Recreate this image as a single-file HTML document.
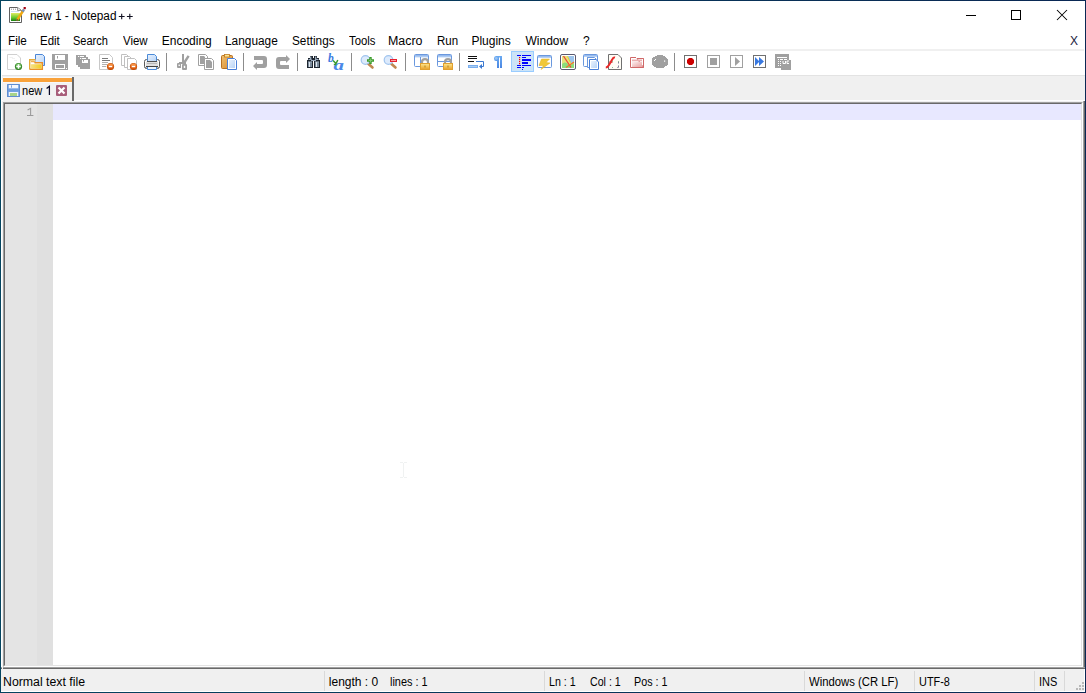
<!DOCTYPE html>
<html><head><meta charset="utf-8">
<style>
*{margin:0;padding:0;box-sizing:border-box}
html,body{width:1086px;height:693px;overflow:hidden;background:#fff}
body{position:relative;font-family:"Liberation Sans",sans-serif;font-size:12px;color:#000}
.a{position:absolute}
.t{position:absolute;white-space:nowrap;line-height:14px;font-size:12px;transform-origin:0 0;color:#000}
.ic{position:absolute;width:16px;height:16px;overflow:visible}
.sep{position:absolute;top:53px;width:1px;height:18px;background:#a0a0a0}
.ssep{position:absolute;top:671px;width:1px;height:20px;background:#d9d9d9}
</style></head><body>

<svg class="a" style="left:0;top:0" width="40" height="30" viewBox="0 0 40 30">
<defs><linearGradient id="gAppGreen2" x1="0" y1="0" x2="0" y2="1"><stop offset="0" stop-color="#e0ea60"/><stop offset="0.55" stop-color="#6ccc30"/><stop offset="1" stop-color="#168010"/></linearGradient></defs>
<path d="M9.5 7.5H17.5L21.5 10.5V22.5H9.5Z" fill="#fff" stroke="#606060"/>
<path d="M17.5 7.5V10.5H21" fill="#e8e8e8" stroke="#808080" stroke-width="0.8"/>
<path d="M11 9.2H12M13 9.2H14M15 9.2H16" stroke="#909090"/>
<path d="M11 11.5H19" stroke="#c8d8e8" stroke-width="0.8"/>
<rect x="11" y="13" width="9" height="8" fill="url(#gAppGreen2)"/>
<path d="M17.2 20L23.6 10" stroke="#f0a810" stroke-width="2.4"/>
<path d="M16.6 20.8L17.6 19.2" stroke="#806040" stroke-width="1.6"/>
<path d="M22.6 11.6L24 9.4" stroke="#7090c0" stroke-width="2.2"/>
<rect x="23.6" y="7" width="2.2" height="2.2" fill="#a00010"/>
</svg>
<svg class="a" style="left:110px;top:8px" width="30" height="16" viewBox="110 8 30 16"><path d="M118.8 16.5H124.6M121.7 13.8V19.2M126.9 16.5H132.7M129.8 13.8V19.2" stroke="#101020" stroke-width="1.1"/></svg>
<div class="t" style="left:583px;top:34px">?</div>
<div class="a" style="left:966px;top:15px;width:10px;height:1px;background:#000"></div>
<div class="a" style="left:1011px;top:10px;width:10px;height:10px;border:1px solid #000"></div>
<svg class="a" style="left:1056px;top:9px" width="12" height="12" viewBox="0 0 12 12"><path d="M1 1L11 11M11 1L1 11" stroke="#000" stroke-width="1.05" fill="none"/></svg>
<div class="t" style="left:1070px;top:34px;color:#1a1a40">X</div>
<div class="a" style="left:1px;top:49px;width:1083px;height:2px;background:#f0f0f0"></div>
<svg class="a" style="left:0;top:0" width="1086" height="80" viewBox="0 0 1086 80"><defs>
<linearGradient id="gGreen" x1="0" y1="0" x2="0" y2="1"><stop offset="0" stop-color="#7cd06a"/><stop offset="1" stop-color="#2f8a22"/></linearGradient>
<linearGradient id="gOrange" x1="0" y1="0" x2="0" y2="1"><stop offset="0" stop-color="#ffa050"/><stop offset="1" stop-color="#d04a00"/></linearGradient>
<linearGradient id="gBlueDoc" x1="0" y1="0" x2="1" y2="1"><stop offset="0" stop-color="#e8f1fd"/><stop offset="1" stop-color="#b8d4f6"/></linearGradient>
<linearGradient id="gYellow" x1="0" y1="0" x2="1" y2="0"><stop offset="0" stop-color="#f6e08a"/><stop offset="1" stop-color="#f2cc20"/></linearGradient>
<linearGradient id="gClip" x1="0" y1="0" x2="1" y2="1"><stop offset="0" stop-color="#f0c070"/><stop offset="1" stop-color="#d88a30"/></linearGradient>
<linearGradient id="gPrinter" x1="0" y1="0" x2="0" y2="1"><stop offset="0" stop-color="#ffffff"/><stop offset="1" stop-color="#b8b8b8"/></linearGradient>
<linearGradient id="gLock" x1="0" y1="0" x2="0" y2="1"><stop offset="0" stop-color="#ffe890"/><stop offset="1" stop-color="#e8a028"/></linearGradient>
<linearGradient id="gTitle" x1="0" y1="0" x2="0" y2="1"><stop offset="0" stop-color="#8ab2ec"/><stop offset="1" stop-color="#c4daf6"/></linearGradient>
<linearGradient id="gPink" x1="0" y1="0" x2="1" y2="1"><stop offset="0" stop-color="#fbecec"/><stop offset="1" stop-color="#e8a0a0"/></linearGradient>
<linearGradient id="gAppGreen" x1="0" y1="0" x2="0" y2="1"><stop offset="0" stop-color="#e8f060"/><stop offset="0.5" stop-color="#70d030"/><stop offset="1" stop-color="#208a10"/></linearGradient>
</defs><path d="M7.5 54.5H17L20.5 58V69.5H7.5Z" fill="#fff" stroke="#d0d0d0"/><path d="M9.5 57.5H13M12 58.5H15M14 60.5H17" stroke="#f0f0f0"/><circle cx="18.5" cy="66.5" r="3.6" fill="#2e7d22"/><circle cx="18.5" cy="66.5" r="2.9" fill="url(#gGreen)"/><path d="M18.5 64.3V68.7M16.3 66.5H20.7" stroke="#fff" stroke-width="1.6"/><path d="M35.5 62V54.5H42.5L44.5 56.5V65.5H42" fill="url(#gBlueDoc)" stroke="#4a86d8"/><rect x="30" y="59.5" width="5.5" height="10" fill="#fff"/><rect x="30" y="62.5" width="12.5" height="7" fill="#fff"/><path d="M29.7 69.5V59.7H35.5" fill="none" stroke="#e6aa3a" stroke-width="1.4"/><path d="M31 61.5H33.5Q34.5 61.5 35 62.5" fill="none" stroke="#f0b050" stroke-width="1.6"/><path d="M34.5 62.7H42.3V69.3H29.7" fill="none" stroke="#e8902a" stroke-width="1.5"/><rect x="30.5" y="64.2" width="11" height="4.4" fill="url(#gYellow)"/><path d="M52 54H68V70H53L52 69Z" fill="#a0a0a0"/><rect x="55" y="55" width="10" height="5" fill="#fff"/><rect x="57" y="56" width="1" height="2.5" fill="#a0a0a0"/><rect x="55" y="64" width="10" height="5" fill="#fff"/><rect x="56" y="65" width="8" height="3" fill="#a0a0a0"/><rect x="66" y="68" width="1" height="1" fill="#fff"/><rect x="76" y="55" width="10" height="10" fill="#a0a0a0"/><rect x="78" y="56" width="1.2" height="1.2" fill="#fff"/><rect x="80" y="56" width="4" height="1.2" fill="#fff"/><rect x="78" y="57" width="10" height="10" fill="#a0a0a0"/><rect x="80" y="58" width="1.2" height="1.2" fill="#fff"/><rect x="82" y="58" width="4" height="1.2" fill="#fff"/><rect x="80" y="59" width="10" height="10" fill="#a0a0a0"/><rect x="82" y="60" width="6" height="3" fill="#fff"/><rect x="83" y="60" width="1" height="1.6" fill="#a0a0a0"/><path d="M99.5 54.5H109.5L112.5 57.5V69.5H99.5Z" fill="#fff" stroke="#c8c8c8"/><path d="M102 58.5H108M102 60.5H110" stroke="#7a7a7a"/><path d="M102 62.5H108M102 64.5H107M102 66.5H106" stroke="#b0b0b0"/><circle cx="110.5" cy="66.5" r="3.6" fill="#c04800"/><circle cx="110.5" cy="66.5" r="3" fill="url(#gOrange)"/><path d="M108.8 66.5H112.2" stroke="#fff" stroke-width="1.4"/><path d="M121.5 54.5H126.5L128.5 56.5V65.5H121.5Z" fill="#fff" stroke="#c0c0c0"/><path d="M124.5 56.5H129.5L131.5 58.5V67.5H124.5Z" fill="#fff" stroke="#c0c0c0"/><path d="M127.5 58.5H134.5L136.5 60.5V69.5H127.5Z" fill="#fff" stroke="#c0c0c0"/><circle cx="133.5" cy="66.5" r="3.6" fill="#c04800"/><circle cx="133.5" cy="66.5" r="3" fill="url(#gOrange)"/><path d="M131.8 66.5H135.2" stroke="#fff" stroke-width="1.4"/><rect x="144.5" y="59.5" width="15" height="9" rx="2" fill="url(#gPrinter)" stroke="#5a5a5a"/><rect x="146" y="62" width="12" height="4" fill="#e0e0e0"/><path d="M147 63.5H157" stroke="#b8b8b8"/><path d="M146 66.5H158" stroke="#404040"/><path d="M145.5 61V67M158.5 61V67" stroke="#fff" stroke-width="0.8"/><path d="M147.5 61.5V54.5H154.5L156.5 56.5V61.5" fill="url(#gBlueDoc)" stroke="#4a8ad8"/><path d="M147 61.5H157" stroke="#505050"/><path d="M147.5 67V69.5H156.5V67" fill="#eef6ff" stroke="#4a8ad8"/><rect x="166" y="53" width="1" height="18" fill="#8c8c8c"/><rect x="243" y="53" width="1" height="18" fill="#8c8c8c"/><rect x="297" y="53" width="1" height="18" fill="#8c8c8c"/><rect x="351" y="53" width="1" height="18" fill="#8c8c8c"/><rect x="405" y="53" width="1" height="18" fill="#8c8c8c"/><rect x="459" y="53" width="1" height="18" fill="#8c8c8c"/><rect x="674" y="53" width="1" height="18" fill="#8c8c8c"/><rect x="182" y="54" width="2" height="9" fill="#a0a0a0"/><path d="M188 56.8L185 61.5" stroke="#a0a0a0" stroke-width="2.4" stroke-linecap="square"/><rect x="179" y="62" width="7" height="2" fill="#a0a0a0"/><path d="M177 64Q177 63 178 63H181V68H178Q177 68 177 67Z" fill="#a0a0a0"/><rect x="178.5" y="64.6" width="1.4" height="1.4" fill="#fff"/><path d="M182 65Q182 64 183 64H186Q187 64 187 65V69Q187 70 186 70H183Q182 70 182 69Z" fill="#a0a0a0"/><rect x="183.8" y="65.8" width="1.4" height="2.2" fill="#fff"/><path d="M198.5 54.5H205.5L207.5 56.5V65.5H198.5Z" fill="#fff" stroke="#a0a0a0"/><path d="M200 56H204L205 57V64H200Z" fill="#a0a0a0"/><path d="M204.5 58.5H211.5L213.5 60.5V69.5H204.5Z" fill="#fff" stroke="#a0a0a0"/><path d="M206 60H210L212 62V68H206Z" fill="#a0a0a0"/><rect x="221.5" y="55.5" width="11" height="13" rx="1" fill="url(#gClip)" stroke="#b87020"/><rect x="224.5" y="54.5" width="5" height="2.5" fill="#ffe890" stroke="#c07820" stroke-width="0.8"/><path d="M227.5 58.5H234.5L236.5 60.5V69.5H227.5Z" fill="#fff" stroke="#4a80d8"/><rect x="229" y="60" width="6" height="8" fill="url(#gBlueDoc)"/><path d="M253 66L257 62V64H262Q263 64 263 63V61Q263 60 262 60H254V56H264Q267 56 267 59V65Q267 68 264 68H257V70Z" fill="#a0a0a0"/><path d="M290 59L286 55V57H279Q276 57 276 60V66Q276 69 279 69H289V65H281Q280 65 280 64V62Q280 61 281 61H286V63Z" fill="#a0a0a0"/><path d="M310 56H313V58H314V56H317V58H319V60H320V68H314V61H313V68H307V60H308V58H310Z" fill="#1e2630"/><path d="M310.7 56.6V60M315.7 56.6V60" stroke="#a8b8c8" stroke-width="1.2"/><path d="M308.5 59.5H311.5M315.5 59.5H318.5M311 60.5H316" stroke="#9aaabe" stroke-width="1"/><rect x="308" y="62" width="4" height="5" fill="#7a8a9a"/><rect x="315" y="62" width="4" height="5" fill="#7a8a9a"/><rect x="309" y="62" width="1" height="5" fill="#e0e8f0"/><rect x="316" y="62" width="1" height="5" fill="#e0e8f0"/><rect x="308" y="61.5" width="4" height="0.8" fill="#b0c0d0"/><rect x="315" y="61.5" width="4" height="0.8" fill="#b0c0d0"/><text x="328" y="62" font-family="Liberation Serif" font-style="italic" font-weight="bold" font-size="11.5" fill="#3a7ae0">b</text><text transform="translate(333.5 69.6) scale(1.35 1)" x="0" y="0" font-family="Liberation Serif" font-style="italic" font-weight="bold" font-size="15.5" fill="#4a88e8">a</text><path d="M333 60.5L336 63.5M337.8 60L335.5 64.5L333.8 64.5" stroke="#3a9a30" stroke-width="1.5" fill="none"/><path d="M368 63.5L372.5 67.5" stroke="#c08850" stroke-width="2.6" stroke-linecap="round"/><circle cx="365.5" cy="60" r="4.3" fill="#dceafc" stroke="#a0c4ee" stroke-width="1.2"/><path d="M370.5 57V64M367 60.5H374" stroke="#3a9a2a" stroke-width="2.4"/><path d="M370.5 58.5V62.5M368.5 60.5H372.5" stroke="#8cd080" stroke-width="0.8"/><path d="M391 63.5L395.5 67.5" stroke="#c08850" stroke-width="2.6" stroke-linecap="round"/><circle cx="388.5" cy="60" r="4.3" fill="#dceafc" stroke="#a0c4ee" stroke-width="1.2"/><rect x="390" y="59" width="7" height="3" fill="#e82030"/><rect x="391" y="60" width="5" height="1" fill="#f8a0a0"/><rect x="414.5" y="54.5" width="14" height="12" rx="1" fill="#fff" stroke="#6a98de"/><rect x="415" y="55" width="13" height="2.5" fill="url(#gTitle)"/><path d="M420.5 57V66" stroke="#6a98de"/><path d="M422 64V62Q422 59.2 425 59.2Q428 59.2 428 62V64" fill="none" stroke="#a0a0a0" stroke-width="2.2"/><rect x="420.5" y="63.5" width="9" height="6" fill="url(#gLock)" stroke="#e0a030"/><rect x="424.5" y="65.5" width="1" height="2" fill="#b08020"/><rect x="437.5" y="54.5" width="14" height="12" rx="1" fill="#fff" stroke="#6a98de"/><rect x="438" y="55" width="13" height="2.5" fill="url(#gTitle)"/><path d="M438 61.5H451" stroke="#6a98de"/><path d="M445 64V62Q445 59.2 448 59.2Q451 59.2 451 62V64" fill="none" stroke="#a0a0a0" stroke-width="2.2"/><rect x="443.5" y="63.5" width="9" height="6" fill="url(#gLock)" stroke="#e0a030"/><rect x="447.5" y="65.5" width="1" height="2" fill="#b08020"/><path d="M468 56.5H477M468 58.5H477M468 61.5H474" stroke="#101010"/><path d="M476 61.5H483.5V66.5H481" fill="none" stroke="#3a78d0"/><path d="M479 66.5L482 64V69Z" fill="#3a78d0"/><rect x="468" y="65" width="10" height="3" fill="#7aaeee"/><rect x="469" y="66" width="8" height="1" fill="#a8cef6"/><linearGradient id="gPil" x1="0" y1="0" x2="0" y2="1"><stop offset="0" stop-color="#6aaaf2"/><stop offset="1" stop-color="#4a86e2"/></linearGradient><path d="M496 56H502V68H500V57.5H499V68H497V61H496Q494 61 494 58.5Q494 56 496 56Z" fill="url(#gPil)"/><circle cx="496.3" cy="58.4" r="1.4" fill="#98c4f4"/><rect x="511.5" y="51.5" width="22" height="20" fill="#cce4f7" stroke="#99ccff"/><path d="M517 55.5H521M522 55.5H531M522 57.5H526M517 65.5H521M522 65.5H531M517 67.5H521M522 67.5H524" stroke="#0000ff"/><rect x="522" y="59" width="9" height="2" fill="#0000ff"/><rect x="522" y="62" width="6" height="2" fill="#0000ff"/><rect x="522" y="69" width="1" height="1" fill="#0000ff"/><rect x="519" y="57" width="1.2" height="1.2" fill="#ff0000"/><rect x="519" y="59" width="1.2" height="1.2" fill="#ff0000"/><rect x="519" y="61" width="1.2" height="1.2" fill="#ff0000"/><rect x="519" y="63" width="1.2" height="1.2" fill="#ff0000"/><rect x="537.5" y="55.5" width="14" height="12" rx="1" fill="#fff" stroke="#6a98de"/><rect x="538" y="56" width="13" height="2" fill="url(#gTitle)"/><path d="M541.5 59L549.5 59L546 62.5L550 63L541 69.5L543.5 65.5L539 65.5Z" fill="#f0c838" stroke="#e0b020" stroke-width="0.5"/><rect x="560.5" y="54.5" width="15" height="15" rx="1.5" fill="#fff" stroke="#5a5a70"/><rect x="562" y="56" width="12" height="12" fill="#e6e27a"/><path d="M568 56H574V62.5L571 63L569 60Z" fill="#9cc4ec"/><path d="M562 64Q564 61.5 567 63L569 66L574 63V68H562Z" fill="#8cdc7c"/><path d="M563.5 56L571 67.5" stroke="#e84838" stroke-width="1.3"/><path d="M566 67.5L574 62" stroke="#f07030" stroke-width="1.2"/><path d="M567.5 56.5L570.5 62.5" stroke="#e8d020" stroke-width="0.9"/><rect x="583.5" y="54.5" width="14" height="12" rx="1" fill="#fff" stroke="#6a98de"/><rect x="584" y="55" width="13" height="2" fill="url(#gTitle)"/><path d="M587.5 57V66" stroke="#6a98de"/><path d="M587.5 57.5H594.5L596.5 59.5V67.5H587.5Z" fill="#fff" stroke="#6a98de"/><path d="M589.5 59.5H596L598.5 62V69.5H589.5Z" fill="#fff" stroke="#4a80d8"/><rect x="591" y="61" width="6" height="7" fill="url(#gBlueDoc)"/><path d="M608.5 54.5H618L621.5 58V69.5H608.5Z" fill="#fffdf6" stroke="#707070"/><path d="M605.8 67.5Q607.5 67.5 609 65L612.5 59Q613.5 57 615 57.5" fill="none" stroke="#e82828" stroke-width="2"/><path d="M609.5 62H612.5" stroke="#e83030" stroke-width="1.6"/><path d="M618.5 61.5V63.5M618.5 65.5V67L617.5 68" stroke="#8080a0" stroke-width="1"/><rect x="612" y="61" width="1" height="1" fill="#90c090"/><rect x="612" y="67" width="1" height="1" fill="#90c090"/><rect x="618" y="61" width="1" height="1" fill="#90c090"/><path d="M630.5 67.5V57.5H636M637 58.5H643.5V67.5Z" fill="none" stroke="#d06868"/><path d="M630.5 67.5H643.5V58.5" fill="none" stroke="#d06868"/><rect x="632" y="59.5" width="10" height="1.8" fill="#eab0b0"/><rect x="632" y="62" width="10" height="5" fill="url(#gPink)"/><path d="M657 55H663V56H665V57H666V58H667V59H668V65H667V66H665V67H664V68H656V67H654V66H653V65H652V58H653V57H655V56H657Z" fill="#a0a0a0"/><path d="M654 61L656 59" stroke="#fff" stroke-width="1"/><rect x="664" y="60.5" width="1.2" height="1.2" fill="#fff"/><rect x="684.5" y="55.5" width="12" height="12" fill="#fff" stroke="#707070"/><path d="M689 58H692L694 60V63L692 65H689L687 63V60Z" fill="#cc0000"/><rect x="707.5" y="55.5" width="12" height="12" fill="#fff" stroke="#a0a0a0"/><rect x="710" y="58" width="7" height="7" fill="#a0a0a0"/><rect x="730.5" y="55.5" width="12" height="12" fill="#fff" stroke="#a0a0a0"/><path d="M735 57L740 61.5L735 66Z" fill="#a0a0a0"/><rect x="753.5" y="55.5" width="12" height="12" fill="#fff" stroke="#707070"/><path d="M755 57L759.5 61.5L755 66Z M759 57L764 61.5L759 66Z" fill="#3878e0"/><rect x="775" y="54" width="14" height="14" fill="#a0a0a0"/><rect x="777" y="57" width="10" height="1" fill="#fff"/><rect x="780" y="59" width="3" height="1" fill="#fff"/><rect x="784" y="59" width="3" height="1" fill="#fff"/><rect x="778" y="59" width="1" height="1" fill="#fff"/><rect x="778" y="61" width="1" height="1" fill="#fff"/><rect x="778" y="63" width="1" height="1" fill="#fff"/><rect x="778" y="65" width="1" height="1" fill="#fff"/><rect x="780" y="61" width="1" height="1" fill="#fff"/><rect x="780" y="63" width="1" height="1" fill="#fff"/><rect x="780" y="65" width="1" height="1" fill="#fff"/><rect x="781" y="60" width="10" height="10" fill="#a0a0a0"/><path d="M783 61V63.5H785.5V61M789 61H787V63.5H789" fill="none" stroke="#fff" stroke-width="1"/></svg>
<div class="a" style="left:1px;top:75px;width:1084px;height:27px;background:#f0f0f0"></div>
<div class="a" style="left:1px;top:75px;width:1084px;height:1px;background:#e3e3e3"></div>
<div class="a" style="left:1px;top:100px;width:1084px;height:1px;background:#fff"></div>
<div class="a" style="left:3px;top:77px;width:69px;height:24px;background:#f2f2f2"></div>
<div class="a" style="left:72px;top:77px;width:2px;height:24px;background:#696969"></div>
<div class="a" style="left:3px;top:77px;width:69px;height:1px;background:#fafafa"></div>
<div class="a" style="left:3px;top:78px;width:69px;height:4px;background:#f9a23a"></div>
<div class="a" style="left:3px;top:82px;width:69px;height:1px;background:#f6f8fb"></div>
<svg class="a" style="left:0;top:80px" width="30" height="20" viewBox="0 80 30 20">
<rect x="7" y="84" width="13" height="13" rx="0.5" fill="#5f8ed2"/>
<rect x="8" y="85" width="11" height="11" fill="#8cb4ea"/>
<rect x="9" y="85" width="9" height="3.4" fill="#f4f8fe"/>
<rect x="11" y="85.3" width="1" height="2.4" fill="#7aa2dc"/>
<rect x="8" y="88.6" width="11" height="3.2" fill="#6e9ee0"/>
<rect x="9" y="92" width="9" height="4" fill="#eef4fb"/>
<rect x="10" y="93" width="7" height="3" fill="#a8d48a"/>
</svg>
<svg class="a" style="left:50px;top:80px" width="26" height="20" viewBox="50 80 26 20">
<rect x="56" y="85" width="11" height="11" rx="1" fill="#a85e7a"/>
<path d="M58.5 87.5L64.5 93.5M64.5 87.5L58.5 93.5" stroke="#fff" stroke-width="2.2"/>
</svg>
<svg class="a" style="left:40px;top:80px" width="15" height="20" viewBox="40 80 15 20"><path d="M46.6 88.6L49.4 86.3V95" fill="none" stroke="#0a0a28" stroke-width="1.25"/></svg>
<div class="a" style="left:3px;top:102px;width:1080px;height:565px;background:#fff;border-top:1px solid #a0a0a0;border-left:1px solid #a0a0a0;border-right:1px solid #fff;border-bottom:1px solid #fff"></div>
<div class="a" style="left:4px;top:103px;width:1078px;height:563px;border-top:1px solid #696969;border-left:1px solid #696969;border-right:1px solid #e3e3e3;border-bottom:1px solid #e3e3e3"></div>
<div class="a" style="left:1083px;top:101px;width:2px;height:568px;border-left:1px solid #a0a0a0;border-right:1px solid #696969"></div>
<div class="a" style="left:5px;top:104px;width:32px;height:561px;background:#e4e4e4"></div>
<div class="a" style="left:37px;top:104px;width:16px;height:561px;background:#e0e0e0"></div>
<div class="a" style="left:53px;top:104px;width:1028px;height:16px;background:#e8e8ff"></div>
<svg class="a" style="left:20px;top:100px" width="20" height="20" viewBox="20 100 20 20"><path d="M27.6 110L30.6 108.3V116M27 115.5H33.4" fill="none" stroke="#9a9a9a" stroke-width="1.05"/></svg>
<div class="a" style="left:400px;top:462px;width:3px;height:1px;background:#f0f2f2"></div><div class="a" style="left:404px;top:462px;width:3px;height:1px;background:#f0f2f2"></div><div class="a" style="left:403px;top:463px;width:1px;height:14px;background:#f0f2f2"></div><div class="a" style="left:400px;top:477px;width:3px;height:1px;background:#f0f2f2"></div><div class="a" style="left:404px;top:477px;width:3px;height:1px;background:#f0f2f2"></div>
<div class="a" style="left:1px;top:667px;width:1084px;height:2px;border-top:1px solid #a0a0a0;border-bottom:1px solid #696969"></div>
<div class="a" style="left:1px;top:669px;width:1083px;height:22px;background:#f0f0f0"></div>
<div class="ssep" style="left:324px"></div>
<div class="ssep" style="left:544px"></div>
<div class="ssep" style="left:804px"></div>
<div class="ssep" style="left:914px"></div>
<div class="ssep" style="left:1034px"></div>
<div class="ssep" style="left:1064px"></div>
<div class="a" style="left:1082px;top:682px;width:2px;height:2px;background:#b8b8b8"></div>
<div class="a" style="left:1079px;top:685px;width:2px;height:2px;background:#b8b8b8"></div>
<div class="a" style="left:1082px;top:685px;width:2px;height:2px;background:#b8b8b8"></div>
<div class="a" style="left:1076px;top:688px;width:2px;height:2px;background:#b8b8b8"></div>
<div class="a" style="left:1079px;top:688px;width:2px;height:2px;background:#b8b8b8"></div>
<div class="a" style="left:1082px;top:688px;width:2px;height:2px;background:#b8b8b8"></div>
<div class="a" style="left:1px;top:75px;width:1px;height:592px;background:#fff"></div>
<div class="a" style="left:2px;top:101px;width:1px;height:568px;background:#f0f0f0"></div>
<div class="t" style="left:30.02px;top:9px;transform:scaleX(0.9816);">new 1 - Notepad</div>
<div class="t" style="left:21.88px;top:84px;transform:scaleX(0.9190);">new</div>
<div class="t" style="left:2.67px;top:675px;transform:scaleX(1.0253);">Normal text file</div>
<div class="t" style="left:328.80px;top:675px;">length : 0</div>
<div class="t" style="left:389.69px;top:675px;transform:scaleX(0.9100);">lines : 1</div>
<div class="t" style="left:548.81px;top:675px;transform:scaleX(0.8897);">Ln : 1</div>
<div class="t" style="left:589.60px;top:675px;transform:scaleX(0.8857);">Col : 1</div>
<div class="t" style="left:633.91px;top:675px;transform:scaleX(0.8944);">Pos : 1</div>
<div class="t" style="left:809.00px;top:675px;transform:scaleX(0.9426);">Windows (CR LF)</div>
<div class="t" style="left:919.09px;top:675px;transform:scaleX(0.9091);">UTF-8</div>
<div class="t" style="left:1039.08px;top:675px;transform:scaleX(0.9158);">INS</div>
<div class="t" style="left:7.73px;top:34px;transform:scaleX(0.9722);">File</div>
<div class="t" style="left:39.75px;top:34px;transform:scaleX(0.9550);">Edit</div>
<div class="t" style="left:73.28px;top:34px;transform:scaleX(0.9189);">Search</div>
<div class="t" style="left:123.30px;top:34px;transform:scaleX(0.9538);">View</div>
<div class="t" style="left:161.71px;top:34px;">Encoding</div>
<div class="t" style="left:225.21px;top:34px;transform:scaleX(0.9885);">Language</div>
<div class="t" style="left:291.62px;top:34px;transform:scaleX(0.9833);">Settings</div>
<div class="t" style="left:348.60px;top:34px;transform:scaleX(0.9464);">Tools</div>
<div class="t" style="left:388.07px;top:34px;transform:scaleX(1.0344);">Macro</div>
<div class="t" style="left:436.54px;top:34px;transform:scaleX(0.9571);">Run</div>
<div class="t" style="left:471.39px;top:34px;">Plugins</div>
<div class="t" style="left:525.50px;top:34px;">Window</div>
<div class="a" style="left:0;top:0;width:1086px;height:1px;background:linear-gradient(90deg,#04445f,#0a2854)"></div><div class="a" style="left:0;top:692px;width:1086px;height:1px;background:linear-gradient(90deg,#04445f,#0a2854)"></div><div class="a" style="left:0;top:0;width:1px;height:693px;background:#04445f"></div><div class="a" style="left:1085px;top:0;width:1px;height:693px;background:#0a2854"></div>
</body></html>
